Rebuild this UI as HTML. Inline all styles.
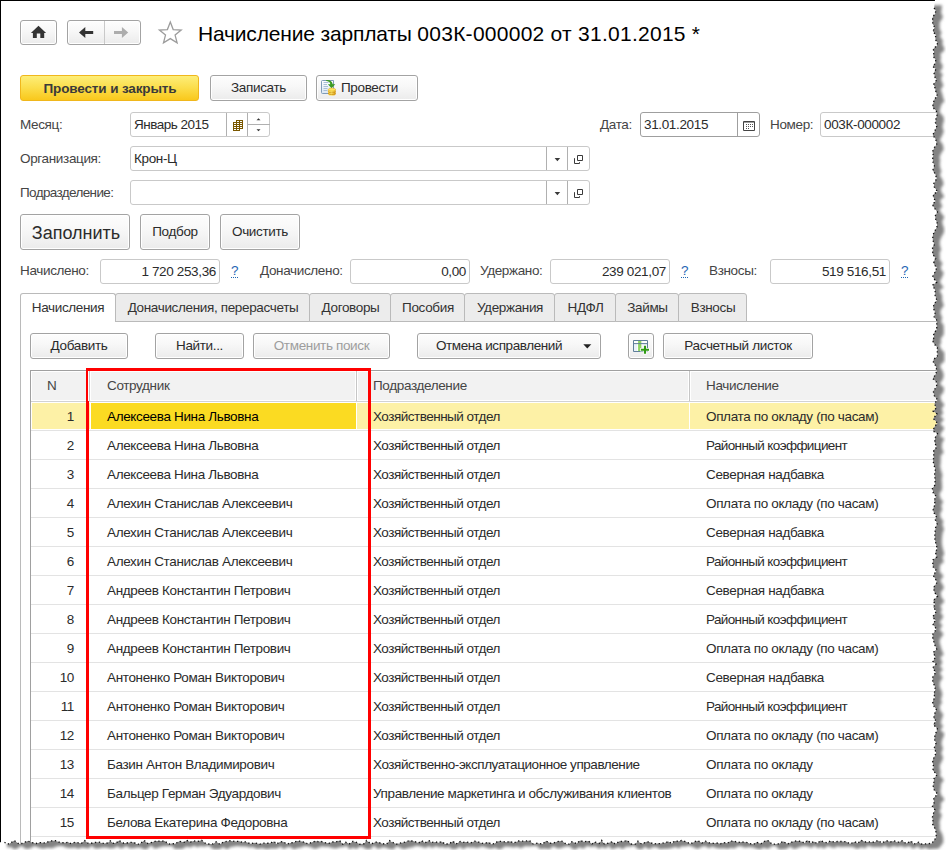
<!DOCTYPE html>
<html lang="ru"><head><meta charset="utf-8"><title>Начисление зарплаты 003К-000002 от 31.01.2015</title>
<style>
html,body{margin:0;padding:0;background:#fff;}
body{width:946px;height:850px;overflow:hidden;position:relative;font-family:"Liberation Sans",Arial,sans-serif;font-size:13.5px;letter-spacing:-.35px;color:#2b2b2b;}
#app{position:absolute;left:0;top:0;width:946px;height:850px;overflow:hidden;}
.abs{position:absolute;}
.frame-l{position:absolute;left:0;top:0;width:1px;height:850px;background:#000;}
.frame-t{position:absolute;left:0;top:0;width:946px;height:1px;background:#000;}
.btn{position:absolute;box-sizing:border-box;border:1px solid #a3a3a3;border-radius:3px;background:linear-gradient(#fdfdfd,#f7f7f7 45%,#ebebeb);color:#2b2b2b;text-align:center;white-space:nowrap;box-shadow:inset 0 0 0 1px #fff;}
.btn.h26{height:26px;line-height:24px;}
.btn.dis{color:#9d9d9d;}
.btn.yel{line-height:26px !important;letter-spacing:-.13px;background:linear-gradient(#fdee78,#fbdd4a 50%,#f9c81c);border-color:#f0b71c;box-shadow:none;padding-left:1px;font-weight:bold;color:#3a3a3a;}
.btn.big{height:36px;line-height:34px;}
.lbl{position:absolute;color:#454545;white-space:nowrap;line-height:16px;}
.inp{position:absolute;box-sizing:border-box;height:25px;border:1px solid #c9c9c9;border-radius:3px;background:#fff;}
.inp.foc{border-color:#9f9f9f;}
.inp .t{position:absolute;left:3px;top:4px;line-height:16px;color:#2b2b2b;white-space:nowrap;}
.inp .t.r{left:auto;right:3px;}
.inp .dv{position:absolute;top:0;bottom:0;width:1px;background:#b0b0b0;}
.inp.foc .dv{background:#9f9f9f;}
.q{position:absolute;color:#1f66b3;line-height:16px;border-bottom:1px dotted #1f66b3;height:14px;}
.title{position:absolute;left:198px;top:21px;font-size:21px;line-height:26px;color:#000;white-space:nowrap;}
.tab{position:absolute;top:293px;height:29px;box-sizing:border-box;border:1px solid #bababa;border-radius:3px 3px 0 0;background:#ececec;line-height:27px;text-align:center;color:#333;white-space:nowrap;}
.tab.act{background:#fff;border-bottom:none;height:29px;border-radius:3px 3px 0 0;}

.tabline{position:absolute;left:116px;top:321px;width:830px;height:1px;background:#bababa;}
.panel-l{position:absolute;left:20px;top:321px;width:1px;height:529px;background:#bababa;}
.grid{position:absolute;left:30px;top:370px;width:916px;height:480px;box-sizing:border-box;border:1px solid #a0a0a0;border-right:none;border-bottom:none;background:#fff;}
.ghead{position:absolute;left:32px;top:372px;width:914px;height:28px;background:#f2f2f2;}
.ghead span{position:absolute;top:6px;line-height:16px;color:#454545;white-space:nowrap;}
.hsep{position:absolute;z-index:1;top:371px;width:1px;height:30px;background:#c6c6c6;box-shadow:-1px 0 0 #fff,1px 0 0 #fff;}
.hline{position:absolute;left:31px;top:400px;width:915px;height:1px;background:#d2d2d2;border-top:1px solid #fff;}
.row{position:absolute;left:31px;width:915px;height:28px;border-bottom:1px solid #e3e3e3;}
.row span{position:absolute;z-index:2;top:7px;line-height:16px;white-space:nowrap;color:#2b2b2b;}
.row .n{left:0;width:43px;text-align:right;}
.row .c1{left:76px;}
.row .c2{left:342px;}
.row .c3{left:675px;}
.row.sel{background:#fff;}
.row.sel:before{content:"";position:absolute;left:1px;top:1px;right:0;height:26px;background:#fdf1a6;}
.row.sel:after{content:"";position:absolute;left:60px;top:1px;width:265px;height:26px;background:#fbdb22;box-shadow:1px 0 0 #fff,-1px 0 0 #fff;}
.row.sel .c1{color:#000;z-index:2;}
.red{position:absolute;left:86px;top:368px;width:279px;height:465px;border:3px solid #ff0000;}
.torn{position:absolute;left:0;top:0;}
svg{display:block;}
.row.sel i{position:absolute;z-index:1;top:0;width:1px;height:28px;background:#fff;}
</style></head>
<body>
<div id="app">
<!-- top nav -->
<div class="btn" style="left:20px;top:20px;width:37px;height:25px;">
<svg class="abs" style="left:9px;top:4px" width="17" height="14" viewBox="0 0 17 14"><path d="M8.5 .7 L.9 8.1 H2.9 V13.1 H6.8 V8.6 H10.3 V13.1 H14.2 V8.1 H16.1 Z" fill="#333"/></svg>
</div>
<div class="btn" style="left:67px;top:20px;width:74px;height:25px;">
<div class="abs" style="left:36px;top:0;width:1px;height:23px;background:#c9c9c9"></div>
<svg class="abs" style="left:11px;top:6px" width="15" height="12" viewBox="0 0 15 12"><path d="M0 5.5 L6.3 0 V4 H14.2 V7 H6.3 V11 Z" fill="#333"/></svg>
<svg class="abs" style="left:46px;top:6px" width="15" height="12" viewBox="0 0 15 12"><path d="M14.2 5.5 L7.9 0 V4 H0 V7 H7.9 V11 Z" fill="#adadad"/></svg>
</div>
<svg class="abs" style="left:157px;top:20px" width="27" height="26" viewBox="0 0 27 26"><path d="M13.3 2.1 L16.2 9.6 L24.2 10.0 L18.1 15.1 L20.1 22.9 L13.3 18.6 L6.5 22.9 L8.5 15.1 L2.4 10.0 L10.4 9.6 Z" fill="#fff" stroke="#9c9c9c" stroke-width="1.3" stroke-linejoin="miter"/></svg>
<div class="title"><span style="letter-spacing:-.17px">Начисление зарплаты </span><span style="letter-spacing:.26px">003К-000002 от 31.01.2015 *</span></div>

<!-- command bar -->
<div class="btn yel h26" style="left:20px;top:75px;width:179px;">Провести и закрыть</div>
<div class="btn h26" style="left:210px;top:75px;width:97px;">Записать</div>
<div class="btn h26" style="left:316px;top:75px;width:102px;text-align:left;"><span class="abs" style="left:24px;top:0">Провести</span>
<svg class="abs" style="left:4px;top:3px" width="16" height="17" viewBox="0 0 16 17">
<defs><linearGradient id="dg" x1="0" y1="0" x2="0" y2="1"><stop offset="0" stop-color="#fff"/><stop offset="1" stop-color="#d9e6f3"/></linearGradient>
<linearGradient id="cg" x1="0" y1="0" x2="1" y2="0"><stop offset="0" stop-color="#f3c231"/><stop offset=".45" stop-color="#fff07a"/><stop offset="1" stop-color="#d99a10"/></linearGradient></defs>
<path d="M.5 2.5 Q.5 1.5 1.5 1.5 H12.5 V14.5 H1.5 Q.5 14.5 .5 13.5Z" fill="url(#dg)" stroke="#7f9bb8"/>
<path d="M2.5 3.5H7.5M2.5 5.5H6M2.5 7.5H7M2.5 9.5H6.5M2.5 11.5H6.5" stroke="#a9bfd6" stroke-width="1"/>
<path d="M5.2 1.1 C9 .6 11.3 2.4 11.7 5.2 H14.3 L10.5 9.2 L6.9 5.2 H9.3 C9 3.4 7.6 2.2 5.2 2.1Z" fill="#3c9a22"/>
<path d="M7.2 10.6 V15 A3.7 1.7 0 0 0 14.6 15 V10.6Z" fill="url(#cg)"/>
<ellipse cx="10.9" cy="10.6" rx="3.7" ry="1.6" fill="#ffe45c" stroke="#d9a21a" stroke-width=".5"/>
<path d="M7.2 12.3 A3.7 1.6 0 0 0 14.6 12.3 M7.2 14 A3.7 1.6 0 0 0 14.6 14" fill="none" stroke="#c98a0c" stroke-width=".7"/>
</svg></div>

<!-- row: month / date / number -->
<div class="lbl" style="left:20px;top:117px">Месяц:</div>
<div class="inp" style="left:130px;top:112px;width:140px;"><span class="t" style="letter-spacing:-.5px">Январь 2015</span>
<div class="dv" style="left:95px"></div><div class="dv" style="left:116px"></div>
<div class="abs" style="left:117px;top:11px;width:22px;height:1px;background:#b0b0b0"></div>
<svg class="abs" style="left:102px;top:7px" width="11" height="11" viewBox="0 0 11 11"><path d="M3 .5H10M0 2.5H10M0 4.5H10M0 6.5H10M0 8.5H10M0 10.5H7M.5 2.5V10.5M3.5 .5V10.5M6.5 .5V10.5M9.5 .5V8.5" fill="none" stroke="#7a5800" stroke-width="1"/></svg>
<svg class="abs" style="left:125px;top:5px" width="5" height="3" viewBox="0 0 5 3"><path d="M.5 2.2L2.5 .2L4.5 2.2Z" fill="#333"/></svg>
<svg class="abs" style="left:125px;top:16px" width="5" height="3" viewBox="0 0 5 3"><path d="M.5 .2L2.5 2.2L4.5 .2Z" fill="#333"/></svg>
</div>
<div class="lbl" style="left:600px;top:117px">Дата:</div>
<div class="inp foc" style="left:640px;top:112px;width:120px;"><span class="t">31.01.2015</span>
<div class="dv" style="left:96px"></div>
<svg class="abs" style="left:102px;top:8px" width="12" height="10" viewBox="0 0 12 10"><path d="M.5 .5H11.5V9.5H.5Z" fill="#fff" stroke="#444" stroke-width="1"/><path d="M1 1.25H11" stroke="#444" stroke-width=".7"/><path d="M3 3h1v1H3zM5 3h1v1H5zM7 3h1v1H7zM9 3h1v1H9zM3 5h1v1H3zM5 5h1v1H5zM7 5h1v1H7zM9 5h1v1H9zM3 7h1v1H3zM5 7h1v1H5z" fill="#555"/></svg>
</div>
<div class="lbl" style="left:770px;top:117px">Номер:</div>
<div class="inp" style="left:820px;top:112px;width:140px;"><span class="t">003К-000002</span></div>

<!-- row: organization -->
<div class="lbl" style="left:20px;top:151px">Организация:</div>
<div class="inp" style="left:130px;top:146px;width:460px;"><span class="t">Крон-Ц</span>
<div class="dv" style="left:415px"></div><div class="dv" style="left:436px"></div>
<svg class="abs" style="left:423px;top:11px" width="7" height="4" viewBox="0 0 7 4"><path d="M.6 0H6.2L3.4 3.3Z" fill="#3a3a3a"/></svg>
<svg class="abs" style="left:443px;top:8px" width="10" height="10" viewBox="0 0 10 10"><path d="M3.5 .5H8.5V5.5H3.5Z M.5 3.2V8.5H5.5V7.2" fill="none" stroke="#3a3a3a" stroke-width="1"/></svg>
</div>
<!-- row: department -->
<div class="lbl" style="left:20px;top:185px;letter-spacing:-.63px">Подразделение:</div>
<div class="inp" style="left:130px;top:180px;width:460px;">
<div class="dv" style="left:415px"></div><div class="dv" style="left:436px"></div>
<svg class="abs" style="left:423px;top:11px" width="7" height="4" viewBox="0 0 7 4"><path d="M.6 0H6.2L3.4 3.3Z" fill="#3a3a3a"/></svg>
<svg class="abs" style="left:443px;top:8px" width="10" height="10" viewBox="0 0 10 10"><path d="M3.5 .5H8.5V5.5H3.5Z M.5 3.2V8.5H5.5V7.2" fill="none" stroke="#3a3a3a" stroke-width="1"/></svg>
</div>

<!-- big buttons -->
<div class="btn big" style="left:20px;top:214px;width:110px;font-size:18px;line-height:36px;letter-spacing:0;padding-left:2px;">Заполнить</div>
<div class="btn big" style="left:140px;top:214px;width:70px;">Подбор</div>
<div class="btn big" style="left:220px;top:214px;width:80px;">Очистить</div>

<!-- totals -->
<div class="lbl" style="left:20px;top:263px">Начислено:</div>
<div class="inp" style="left:100px;top:259px;width:120px;"><span class="t r">1 720 253,36</span></div>
<div class="q" style="left:231px;top:263px">?</div>
<div class="lbl" style="left:260px;top:263px">Доначислено:</div>
<div class="inp" style="left:350px;top:259px;width:120px;"><span class="t r">0,00</span></div>
<div class="lbl" style="left:480px;top:263px">Удержано:</div>
<div class="inp" style="left:550px;top:259px;width:120px;"><span class="t r">239 021,07</span></div>
<div class="q" style="left:681px;top:263px">?</div>
<div class="lbl" style="left:709px;top:263px">Взносы:</div>
<div class="inp" style="left:770px;top:259px;width:120px;"><span class="t r">519 516,51</span></div>
<div class="q" style="left:901px;top:263px">?</div>

<!-- tabs -->
<div class="tabline"></div>
<div class="tab" style="left:115px;width:195px;text-indent:1px;">Доначисления, перерасчеты</div>
<div class="tab" style="left:309px;width:82px;text-indent:1px;">Договоры</div>
<div class="tab" style="left:390px;width:75px;text-indent:1px;">Пособия</div>
<div class="tab" style="left:464px;width:91px;text-indent:1px;">Удержания</div>
<div class="tab" style="left:554px;width:62px;text-indent:1px;">НДФЛ</div>
<div class="tab" style="left:615px;width:64px;text-indent:1px;">Займы</div>
<div class="tab last" style="left:678px;width:69px;text-indent:1px;">Взносы</div>
<div class="tab act" style="left:20px;width:96px;">Начисления</div>
<div class="panel-l"></div>

<!-- toolbar -->
<div class="btn h26" style="left:30px;top:333px;width:98px;">Добавить</div>
<div class="btn h26" style="left:155px;top:333px;width:89px;">Найти...</div>
<div class="btn h26 dis" style="left:253px;top:333px;width:137px;">Отменить поиск</div>
<div class="btn h26" style="left:417px;top:333px;width:184px;text-align:left;"><span class="abs" style="left:18px;top:0;letter-spacing:-.42px">Отмена исправлений</span>
<svg class="abs" style="left:165px;top:10px" width="9" height="5" viewBox="0 0 9 5"><path d="M.3 .3H8.3L4.3 4.5Z" fill="#222"/></svg></div>
<div class="btn h26" style="left:628px;top:333px;width:26px;">
<svg class="abs" style="left:4px;top:6px" width="18" height="16" viewBox="0 0 18 16">
<path d="M.5 .5H14.5V11.5H.5Z" fill="#eaf1f8" stroke="#5f7f99" stroke-width="1"/>
<path d="M1 1H4.5V3H1ZM9.5 1H14V3H9.5Z" fill="#fff"/>
<path d="M5 1H8.6V11H5Z" fill="#8fd460"/>
<path d="M4.6 1V11M9 1V11" stroke="#fff" stroke-width=".9" fill="none"/><path d="M.5 3.6H14.5" stroke="#5f7f99" stroke-width="1" fill="none"/>
<path d="M12 5V14.6M7.2 9.8H16.8" stroke="#fff" stroke-width="3.6" opacity=".9"/>
<path d="M12 5.8V13.8M8 9.8H16" stroke="#2f9a12" stroke-width="2.1"/>
</svg></div>
<div class="btn h26" style="left:663px;top:333px;width:150px;">Расчетный листок</div>

<!-- grid -->
<div class="grid"></div>
<div class="ghead"><span style="left:15px">N</span><span style="left:75px">Сотрудник</span><span style="left:341px">Подразделение</span><span style="left:674px">Начисление</span></div>
<div class="hsep" style="left:89px"></div><div class="hsep" style="left:356px"></div><div class="hsep" style="left:689px"></div>
<div class="hline"></div>
<div class="row sel" style="top:402px"><i style="left:658px"></i><span class="n">1</span><span class="c1">Алексеева Нина Львовна</span><span class="c2" style="letter-spacing:-0.5px">Хозяйственный отдел</span><span class="c3">Оплата по окладу (по часам)</span></div>
<div class="row" style="top:431px"><span class="n">2</span><span class="c1">Алексеева Нина Львовна</span><span class="c2" style="letter-spacing:-0.5px">Хозяйственный отдел</span><span class="c3" style="letter-spacing:-0.63px">Районный коэффициент</span></div>
<div class="row" style="top:460px"><span class="n">3</span><span class="c1">Алексеева Нина Львовна</span><span class="c2" style="letter-spacing:-0.5px">Хозяйственный отдел</span><span class="c3">Северная надбавка</span></div>
<div class="row" style="top:489px"><span class="n">4</span><span class="c1">Алехин Станислав Алексеевич</span><span class="c2" style="letter-spacing:-0.5px">Хозяйственный отдел</span><span class="c3">Оплата по окладу (по часам)</span></div>
<div class="row" style="top:518px"><span class="n">5</span><span class="c1">Алехин Станислав Алексеевич</span><span class="c2" style="letter-spacing:-0.5px">Хозяйственный отдел</span><span class="c3">Северная надбавка</span></div>
<div class="row" style="top:547px"><span class="n">6</span><span class="c1">Алехин Станислав Алексеевич</span><span class="c2" style="letter-spacing:-0.5px">Хозяйственный отдел</span><span class="c3" style="letter-spacing:-0.63px">Районный коэффициент</span></div>
<div class="row" style="top:576px"><span class="n">7</span><span class="c1">Андреев Константин Петрович</span><span class="c2" style="letter-spacing:-0.5px">Хозяйственный отдел</span><span class="c3">Северная надбавка</span></div>
<div class="row" style="top:605px"><span class="n">8</span><span class="c1">Андреев Константин Петрович</span><span class="c2" style="letter-spacing:-0.5px">Хозяйственный отдел</span><span class="c3" style="letter-spacing:-0.63px">Районный коэффициент</span></div>
<div class="row" style="top:634px"><span class="n">9</span><span class="c1">Андреев Константин Петрович</span><span class="c2" style="letter-spacing:-0.5px">Хозяйственный отдел</span><span class="c3">Оплата по окладу (по часам)</span></div>
<div class="row" style="top:663px"><span class="n">10</span><span class="c1">Антоненко Роман Викторович</span><span class="c2" style="letter-spacing:-0.5px">Хозяйственный отдел</span><span class="c3">Северная надбавка</span></div>
<div class="row" style="top:692px"><span class="n">11</span><span class="c1">Антоненко Роман Викторович</span><span class="c2" style="letter-spacing:-0.5px">Хозяйственный отдел</span><span class="c3" style="letter-spacing:-0.63px">Районный коэффициент</span></div>
<div class="row" style="top:721px"><span class="n">12</span><span class="c1">Антоненко Роман Викторович</span><span class="c2" style="letter-spacing:-0.5px">Хозяйственный отдел</span><span class="c3">Оплата по окладу (по часам)</span></div>
<div class="row" style="top:750px"><span class="n">13</span><span class="c1">Базин Антон Владимирович</span><span class="c2" style="letter-spacing:-0.44px">Хозяйственно-эксплуатационное управление</span><span class="c3">Оплата по окладу</span></div>
<div class="row" style="top:779px"><span class="n">14</span><span class="c1">Бальцер Герман Эдуардович</span><span class="c2" style="letter-spacing:-0.38px">Управление маркетинга и обслуживания клиентов</span><span class="c3">Оплата по окладу</span></div>
<div class="row" style="top:808px"><span class="n">15</span><span class="c1">Белова Екатерина Федоровна</span><span class="c2" style="letter-spacing:-0.5px">Хозяйственный отдел</span><span class="c3">Оплата по окладу (по часам)</span></div>
<div class="row" style="top:837px"><span class="n"></span><span class="c1"></span><span class="c2"></span><span class="c3"></span></div>
<div class="red"></div>
<div class="frame-l"></div><div class="frame-t"></div>
<svg class="torn" width="946" height="850" viewBox="0 0 946 850">
<defs>
<filter id="bl" x="-5%" y="-5%" width="110%" height="110%"><feGaussianBlur stdDeviation="1.6"/></filter>
<clipPath id="outc"><path clip-rule="evenodd" d="M0 0 H946 V850 H0 Z M0 0 L935 0 L934.1 8 L935.8 10.9 L935.2 13.6 L932.7 17.0 L932.6 20.7 L932.8 24.3 L934.6 27.1 L933.0 31.6 L935.7 34.7 L935.4 39.5 L937.5 43.0 L936.9 45.7 L933.2 48.9 L934.0 51.7 L933.3 56.2 L935.7 60.2 L935.2 63.6 L932.7 66.3 L935.9 69.3 L934.0 72.8 L934.8 76.8 L936.5 80.1 L933.7 84.3 L935.1 88.2 L936.2 92.9 L937.5 96.1 L934.6 98.9 L933.2 103.3 L932.6 107.1 L936.4 111.2 L937.0 115.2 L936.0 118.4 L935.4 122.4 L936.8 126.1 L934.9 130.9 L932.7 135.1 L935.8 139.3 L936.7 144.3 L934.4 147.5 L932.5 151.7 L933.3 155.4 L932.7 158.2 L933.1 162.6 L934.4 165.7 L932.8 170.4 L935.3 174.0 L936.7 178.7 L933.8 183.4 L934.3 186.9 L937.4 191.6 L933.3 194.5 L933.6 197.6 L935.5 201.3 L932.4 204.4 L934.3 208.0 L937.4 211.9 L935.1 216.1 L935.9 220.2 L937.1 222.8 L936.9 227.3 L934.4 231.8 L932.9 235.3 L932.7 239.3 L933.5 242.0 L934.2 244.9 L932.4 247.5 L932.9 250.4 L932.5 253.8 L935.6 258.5 L933.7 261.4 L934.3 264.8 L936.8 267.6 L934.8 272.5 L932.8 276.3 L934.2 279.0 L936.7 282.2 L932.5 285.1 L935.1 290.0 L935.2 292.8 L935.1 295.4 L936.9 300.3 L933.8 304.6 L933.3 308.0 L935.2 312.4 L934.1 316.9 L936.6 319.9 L936.8 324.9 L936.7 329.4 L933.6 333.8 L934.2 337.5 L932.5 340.1 L933.7 343.3 L937.4 347.6 L937.3 351.2 L937.4 356.1 L933.5 359.6 L933.4 362.6 L935.6 365.6 L936.8 370.4 L935.8 374.1 L932.8 378.6 L937.1 382.7 L936.3 387.2 L933.3 390.9 L934.1 395.4 L937.5 399.9 L934.5 403.3 L936.2 408.2 L933.1 411.1 L937.1 414.0 L933.2 418.5 L937.5 423.1 L934.2 427.2 L933.1 431.1 L937.4 433.6 L935.1 437.8 L934.7 442.6 L936.7 447.3 L933.7 450.3 L933.7 453.5 L933.7 457.5 L933.1 461.1 L934.2 465.8 L935.4 469.5 L934.6 474.2 L935.0 479.0 L935.1 482.9 L934.7 485.4 L932.4 488.4 L933.3 492.9 L936.2 496.5 L934.1 500.4 L935.3 504.2 L933.0 508.7 L933.7 512.6 L936.4 515.8 L935.3 519.6 L937.1 524.0 L935.6 527.6 L935.1 531.3 L934.8 535.6 L934.9 539.4 L936.0 544.2 L937.3 548.9 L935.3 552.1 L936.8 556.9 L933.0 559.8 L932.8 563.4 L932.8 566.5 L936.5 570.7 L933.2 575.4 L935.8 579.7 L937.0 582.6 L933.5 587.5 L934.5 592.4 L937.5 596.1 L933.2 600.7 L935.1 604.2 L933.4 607.6 L936.2 610.9 L935.3 613.4 L932.5 617.0 L935.6 620.4 L932.7 624.1 L936.5 629.1 L932.9 634.0 L932.6 637.2 L933.8 641.6 L934.6 644.5 L936.7 649.2 L933.2 652.4 L935.4 657.2 L932.9 661.4 L936.0 664.1 L932.8 667.7 L935.7 672.5 L932.8 677.0 L932.7 681.6 L934.8 686.3 L935.3 689.6 L933.8 694.5 L935.1 697.3 L933.0 700.4 L932.7 703.3 L934.0 706.3 L936.3 709.6 L935.0 712.8 L934.2 715.7 L933.7 718.3 L936.2 720.8 L933.4 724.7 L937.3 728.4 L936.7 731.1 L935.0 734.7 L934.4 739.3 L936.0 743.1 L934.2 748.0 L936.1 752.6 L934.5 756.7 L932.7 760.1 L932.8 762.9 L933.7 767.2 L932.8 770.2 L936.9 774.8 L933.9 778.9 L933.9 782.0 L933.2 785.7 L933.8 789.3 L937.5 794.2 L933.7 798.1 L934.0 803.0 L932.4 806.4 L934.9 809.8 L933.4 813.6 L932.4 817.4 L932.9 820.5 L932.6 824.0 L934.0 826.6 L935.4 829.6 L936.3 833.5 L936.1 837.6 L931.8 843.4 L928.9 843.6 L924.8 843.9 L921.3 844.0 L918.7 842.2 L913.8 844.1 L911.0 841.1 L906.0 843.5 L902.3 840.7 L897.5 842.4 L894.3 840.9 L890.5 841.8 L886.5 840.7 L881.7 842.9 L877.8 840.4 L874.9 842.1 L870.2 841.9 L865.7 842.0 L860.9 840.3 L857.9 843.2 L854.9 841.8 L849.9 843.8 L846.4 841.7 L842.5 841.5 L837.6 841.5 L834.4 841.9 L830.1 841.0 L827.4 842.9 L823.5 841.9 L820.8 840.6 L816.9 843.5 L813.9 841.5 L810.9 843.0 L807.6 840.3 L804.6 842.9 L800.6 841.3 L797.6 840.9 L794.2 841.2 L790.1 842.7 L787.4 844.1 L782.9 841.3 L779.3 843.8 L775.9 844.0 L771.9 844.2 L768.9 840.8 L765.7 840.5 L760.9 843.7 L756.4 842.2 L753.6 844.3 L749.5 843.5 L746.4 842.3 L741.4 841.9 L738.1 842.6 L733.4 840.9 L730.3 841.3 L727.3 843.3 L723.8 842.6 L720.6 843.7 L717.8 843.0 L713.2 843.3 L709.0 842.8 L705.5 841.2 L701.8 843.1 L698.1 840.7 L695.4 841.4 L690.4 843.8 L685.5 841.6 L681.6 840.4 L678.9 841.3 L674.5 841.1 L671.8 843.4 L668.4 841.6 L665.1 842.7 L660.7 843.6 L656.3 843.5 L653.4 844.0 L649.6 842.0 L646.5 841.8 L641.6 844.1 L637.9 841.2 L635.4 844.1 L631.3 844.0 L626.9 840.3 L623.7 841.6 L619.4 841.3 L615.4 844.1 L612.2 841.7 L607.5 843.3 L604.3 844.0 L601.7 840.4 L599.1 843.4 L594.5 841.9 L592.0 843.9 L588.5 841.1 L583.7 841.8 L580.1 840.5 L576.5 843.6 L571.9 841.7 L568.9 844.2 L566.1 844.1 L562.7 841.4 L560.2 841.0 L556.9 841.8 L553.4 843.0 L550.9 843.3 L546.0 841.0 L542.7 844.0 L537.7 843.2 L533.0 843.9 L529.5 840.5 L526.9 840.9 L521.9 841.2 L518.5 840.9 L513.6 843.0 L510.0 841.2 L507.1 842.3 L502.2 841.5 L497.8 841.2 L494.7 843.6 L491.4 844.2 L488.4 842.3 L484.1 843.5 L481.1 843.0 L477.5 841.7 L474.9 841.2 L470.1 843.0 L467.0 842.0 L462.8 842.3 L460.2 841.5 L456.0 844.1 L452.9 841.2 L449.2 843.8 L445.1 844.1 L441.4 841.5 L438.9 842.7 L435.8 841.9 L431.9 842.4 L429.2 840.7 L425.0 842.8 L421.8 840.8 L418.6 842.9 L413.8 841.2 L409.3 840.5 L405.4 842.1 L401.0 842.9 L396.7 844.1 L392.5 842.4 L389.6 840.7 L386.5 844.2 L381.9 843.6 L377.0 841.9 L374.5 842.6 L370.9 843.9 L366.6 840.4 L364.0 843.8 L359.4 844.1 L355.8 841.9 L352.7 841.4 L349.6 843.8 L345.6 842.3 L342.7 844.2 L339.6 840.5 L336.2 841.8 L332.4 842.0 L328.9 843.3 L324.1 842.6 L321.0 841.3 L318.3 841.7 L315.5 841.1 L312.7 842.1 L307.7 843.9 L304.7 842.3 L299.9 841.1 L297.0 841.0 L293.5 842.5 L290.2 842.9 L287.1 844.2 L282.7 841.5 L279.4 842.2 L276.6 844.0 L273.9 841.4 L269.8 843.3 L266.2 843.2 L263.6 843.2 L259.7 844.1 L254.9 842.8 L250.4 843.8 L245.5 841.8 L242.5 842.3 L239.4 841.3 L234.5 841.4 L229.9 840.7 L227.3 841.4 L223.8 841.7 L219.8 844.3 L216.3 841.8 L213.1 843.9 L208.8 844.0 L206.0 843.7 L201.6 840.3 L197.0 841.6 L193.7 840.9 L190.4 842.1 L186.7 840.3 L184.1 842.2 L179.4 841.2 L175.1 843.8 L171.3 843.6 L168.5 844.1 L164.7 840.9 L160.7 841.1 L155.9 841.1 L152.7 842.1 L147.8 843.6 L144.1 840.4 L139.3 844.2 L136.3 843.9 L133.5 842.2 L129.8 842.4 L126.6 843.0 L122.4 843.0 L119.2 840.5 L116.7 842.6 L113.4 843.3 L110.3 840.9 L107.6 842.9 L103.5 843.4 L99.3 842.2 L95.9 842.3 L90.9 843.3 L87.9 843.2 L84.8 840.6 L81.6 843.2 L79.0 842.9 L75.1 842.3 L70.8 843.5 L68.3 842.3 L64.1 842.8 L60.0 842.5 L55.4 840.7 L52.0 840.8 L49.4 841.2 L45.2 843.0 L40.4 842.6 L35.9 843.5 L31.3 842.3 L27.5 840.9 L23.0 843.2 L18.9 843.9 L14.3 840.5 L10.2 843.2 L7.3 844.2 L4 841.9 L0 842.3 Z"/></clipPath>
</defs>
<path fill="#fff" fill-rule="evenodd" d="M0 0 H946 V850 H0 Z M0 0 L935 0 L934.1 8 L935.8 10.9 L935.2 13.6 L932.7 17.0 L932.6 20.7 L932.8 24.3 L934.6 27.1 L933.0 31.6 L935.7 34.7 L935.4 39.5 L937.5 43.0 L936.9 45.7 L933.2 48.9 L934.0 51.7 L933.3 56.2 L935.7 60.2 L935.2 63.6 L932.7 66.3 L935.9 69.3 L934.0 72.8 L934.8 76.8 L936.5 80.1 L933.7 84.3 L935.1 88.2 L936.2 92.9 L937.5 96.1 L934.6 98.9 L933.2 103.3 L932.6 107.1 L936.4 111.2 L937.0 115.2 L936.0 118.4 L935.4 122.4 L936.8 126.1 L934.9 130.9 L932.7 135.1 L935.8 139.3 L936.7 144.3 L934.4 147.5 L932.5 151.7 L933.3 155.4 L932.7 158.2 L933.1 162.6 L934.4 165.7 L932.8 170.4 L935.3 174.0 L936.7 178.7 L933.8 183.4 L934.3 186.9 L937.4 191.6 L933.3 194.5 L933.6 197.6 L935.5 201.3 L932.4 204.4 L934.3 208.0 L937.4 211.9 L935.1 216.1 L935.9 220.2 L937.1 222.8 L936.9 227.3 L934.4 231.8 L932.9 235.3 L932.7 239.3 L933.5 242.0 L934.2 244.9 L932.4 247.5 L932.9 250.4 L932.5 253.8 L935.6 258.5 L933.7 261.4 L934.3 264.8 L936.8 267.6 L934.8 272.5 L932.8 276.3 L934.2 279.0 L936.7 282.2 L932.5 285.1 L935.1 290.0 L935.2 292.8 L935.1 295.4 L936.9 300.3 L933.8 304.6 L933.3 308.0 L935.2 312.4 L934.1 316.9 L936.6 319.9 L936.8 324.9 L936.7 329.4 L933.6 333.8 L934.2 337.5 L932.5 340.1 L933.7 343.3 L937.4 347.6 L937.3 351.2 L937.4 356.1 L933.5 359.6 L933.4 362.6 L935.6 365.6 L936.8 370.4 L935.8 374.1 L932.8 378.6 L937.1 382.7 L936.3 387.2 L933.3 390.9 L934.1 395.4 L937.5 399.9 L934.5 403.3 L936.2 408.2 L933.1 411.1 L937.1 414.0 L933.2 418.5 L937.5 423.1 L934.2 427.2 L933.1 431.1 L937.4 433.6 L935.1 437.8 L934.7 442.6 L936.7 447.3 L933.7 450.3 L933.7 453.5 L933.7 457.5 L933.1 461.1 L934.2 465.8 L935.4 469.5 L934.6 474.2 L935.0 479.0 L935.1 482.9 L934.7 485.4 L932.4 488.4 L933.3 492.9 L936.2 496.5 L934.1 500.4 L935.3 504.2 L933.0 508.7 L933.7 512.6 L936.4 515.8 L935.3 519.6 L937.1 524.0 L935.6 527.6 L935.1 531.3 L934.8 535.6 L934.9 539.4 L936.0 544.2 L937.3 548.9 L935.3 552.1 L936.8 556.9 L933.0 559.8 L932.8 563.4 L932.8 566.5 L936.5 570.7 L933.2 575.4 L935.8 579.7 L937.0 582.6 L933.5 587.5 L934.5 592.4 L937.5 596.1 L933.2 600.7 L935.1 604.2 L933.4 607.6 L936.2 610.9 L935.3 613.4 L932.5 617.0 L935.6 620.4 L932.7 624.1 L936.5 629.1 L932.9 634.0 L932.6 637.2 L933.8 641.6 L934.6 644.5 L936.7 649.2 L933.2 652.4 L935.4 657.2 L932.9 661.4 L936.0 664.1 L932.8 667.7 L935.7 672.5 L932.8 677.0 L932.7 681.6 L934.8 686.3 L935.3 689.6 L933.8 694.5 L935.1 697.3 L933.0 700.4 L932.7 703.3 L934.0 706.3 L936.3 709.6 L935.0 712.8 L934.2 715.7 L933.7 718.3 L936.2 720.8 L933.4 724.7 L937.3 728.4 L936.7 731.1 L935.0 734.7 L934.4 739.3 L936.0 743.1 L934.2 748.0 L936.1 752.6 L934.5 756.7 L932.7 760.1 L932.8 762.9 L933.7 767.2 L932.8 770.2 L936.9 774.8 L933.9 778.9 L933.9 782.0 L933.2 785.7 L933.8 789.3 L937.5 794.2 L933.7 798.1 L934.0 803.0 L932.4 806.4 L934.9 809.8 L933.4 813.6 L932.4 817.4 L932.9 820.5 L932.6 824.0 L934.0 826.6 L935.4 829.6 L936.3 833.5 L936.1 837.6 L931.8 843.4 L928.9 843.6 L924.8 843.9 L921.3 844.0 L918.7 842.2 L913.8 844.1 L911.0 841.1 L906.0 843.5 L902.3 840.7 L897.5 842.4 L894.3 840.9 L890.5 841.8 L886.5 840.7 L881.7 842.9 L877.8 840.4 L874.9 842.1 L870.2 841.9 L865.7 842.0 L860.9 840.3 L857.9 843.2 L854.9 841.8 L849.9 843.8 L846.4 841.7 L842.5 841.5 L837.6 841.5 L834.4 841.9 L830.1 841.0 L827.4 842.9 L823.5 841.9 L820.8 840.6 L816.9 843.5 L813.9 841.5 L810.9 843.0 L807.6 840.3 L804.6 842.9 L800.6 841.3 L797.6 840.9 L794.2 841.2 L790.1 842.7 L787.4 844.1 L782.9 841.3 L779.3 843.8 L775.9 844.0 L771.9 844.2 L768.9 840.8 L765.7 840.5 L760.9 843.7 L756.4 842.2 L753.6 844.3 L749.5 843.5 L746.4 842.3 L741.4 841.9 L738.1 842.6 L733.4 840.9 L730.3 841.3 L727.3 843.3 L723.8 842.6 L720.6 843.7 L717.8 843.0 L713.2 843.3 L709.0 842.8 L705.5 841.2 L701.8 843.1 L698.1 840.7 L695.4 841.4 L690.4 843.8 L685.5 841.6 L681.6 840.4 L678.9 841.3 L674.5 841.1 L671.8 843.4 L668.4 841.6 L665.1 842.7 L660.7 843.6 L656.3 843.5 L653.4 844.0 L649.6 842.0 L646.5 841.8 L641.6 844.1 L637.9 841.2 L635.4 844.1 L631.3 844.0 L626.9 840.3 L623.7 841.6 L619.4 841.3 L615.4 844.1 L612.2 841.7 L607.5 843.3 L604.3 844.0 L601.7 840.4 L599.1 843.4 L594.5 841.9 L592.0 843.9 L588.5 841.1 L583.7 841.8 L580.1 840.5 L576.5 843.6 L571.9 841.7 L568.9 844.2 L566.1 844.1 L562.7 841.4 L560.2 841.0 L556.9 841.8 L553.4 843.0 L550.9 843.3 L546.0 841.0 L542.7 844.0 L537.7 843.2 L533.0 843.9 L529.5 840.5 L526.9 840.9 L521.9 841.2 L518.5 840.9 L513.6 843.0 L510.0 841.2 L507.1 842.3 L502.2 841.5 L497.8 841.2 L494.7 843.6 L491.4 844.2 L488.4 842.3 L484.1 843.5 L481.1 843.0 L477.5 841.7 L474.9 841.2 L470.1 843.0 L467.0 842.0 L462.8 842.3 L460.2 841.5 L456.0 844.1 L452.9 841.2 L449.2 843.8 L445.1 844.1 L441.4 841.5 L438.9 842.7 L435.8 841.9 L431.9 842.4 L429.2 840.7 L425.0 842.8 L421.8 840.8 L418.6 842.9 L413.8 841.2 L409.3 840.5 L405.4 842.1 L401.0 842.9 L396.7 844.1 L392.5 842.4 L389.6 840.7 L386.5 844.2 L381.9 843.6 L377.0 841.9 L374.5 842.6 L370.9 843.9 L366.6 840.4 L364.0 843.8 L359.4 844.1 L355.8 841.9 L352.7 841.4 L349.6 843.8 L345.6 842.3 L342.7 844.2 L339.6 840.5 L336.2 841.8 L332.4 842.0 L328.9 843.3 L324.1 842.6 L321.0 841.3 L318.3 841.7 L315.5 841.1 L312.7 842.1 L307.7 843.9 L304.7 842.3 L299.9 841.1 L297.0 841.0 L293.5 842.5 L290.2 842.9 L287.1 844.2 L282.7 841.5 L279.4 842.2 L276.6 844.0 L273.9 841.4 L269.8 843.3 L266.2 843.2 L263.6 843.2 L259.7 844.1 L254.9 842.8 L250.4 843.8 L245.5 841.8 L242.5 842.3 L239.4 841.3 L234.5 841.4 L229.9 840.7 L227.3 841.4 L223.8 841.7 L219.8 844.3 L216.3 841.8 L213.1 843.9 L208.8 844.0 L206.0 843.7 L201.6 840.3 L197.0 841.6 L193.7 840.9 L190.4 842.1 L186.7 840.3 L184.1 842.2 L179.4 841.2 L175.1 843.8 L171.3 843.6 L168.5 844.1 L164.7 840.9 L160.7 841.1 L155.9 841.1 L152.7 842.1 L147.8 843.6 L144.1 840.4 L139.3 844.2 L136.3 843.9 L133.5 842.2 L129.8 842.4 L126.6 843.0 L122.4 843.0 L119.2 840.5 L116.7 842.6 L113.4 843.3 L110.3 840.9 L107.6 842.9 L103.5 843.4 L99.3 842.2 L95.9 842.3 L90.9 843.3 L87.9 843.2 L84.8 840.6 L81.6 843.2 L79.0 842.9 L75.1 842.3 L70.8 843.5 L68.3 842.3 L64.1 842.8 L60.0 842.5 L55.4 840.7 L52.0 840.8 L49.4 841.2 L45.2 843.0 L40.4 842.6 L35.9 843.5 L31.3 842.3 L27.5 840.9 L23.0 843.2 L18.9 843.9 L14.3 840.5 L10.2 843.2 L7.3 844.2 L4 841.9 L0 842.3 Z"/>
<g clip-path="url(#outc)"><path d="M0 0 L935 0 L934.1 8 L935.8 10.9 L935.2 13.6 L932.7 17.0 L932.6 20.7 L932.8 24.3 L934.6 27.1 L933.0 31.6 L935.7 34.7 L935.4 39.5 L937.5 43.0 L936.9 45.7 L933.2 48.9 L934.0 51.7 L933.3 56.2 L935.7 60.2 L935.2 63.6 L932.7 66.3 L935.9 69.3 L934.0 72.8 L934.8 76.8 L936.5 80.1 L933.7 84.3 L935.1 88.2 L936.2 92.9 L937.5 96.1 L934.6 98.9 L933.2 103.3 L932.6 107.1 L936.4 111.2 L937.0 115.2 L936.0 118.4 L935.4 122.4 L936.8 126.1 L934.9 130.9 L932.7 135.1 L935.8 139.3 L936.7 144.3 L934.4 147.5 L932.5 151.7 L933.3 155.4 L932.7 158.2 L933.1 162.6 L934.4 165.7 L932.8 170.4 L935.3 174.0 L936.7 178.7 L933.8 183.4 L934.3 186.9 L937.4 191.6 L933.3 194.5 L933.6 197.6 L935.5 201.3 L932.4 204.4 L934.3 208.0 L937.4 211.9 L935.1 216.1 L935.9 220.2 L937.1 222.8 L936.9 227.3 L934.4 231.8 L932.9 235.3 L932.7 239.3 L933.5 242.0 L934.2 244.9 L932.4 247.5 L932.9 250.4 L932.5 253.8 L935.6 258.5 L933.7 261.4 L934.3 264.8 L936.8 267.6 L934.8 272.5 L932.8 276.3 L934.2 279.0 L936.7 282.2 L932.5 285.1 L935.1 290.0 L935.2 292.8 L935.1 295.4 L936.9 300.3 L933.8 304.6 L933.3 308.0 L935.2 312.4 L934.1 316.9 L936.6 319.9 L936.8 324.9 L936.7 329.4 L933.6 333.8 L934.2 337.5 L932.5 340.1 L933.7 343.3 L937.4 347.6 L937.3 351.2 L937.4 356.1 L933.5 359.6 L933.4 362.6 L935.6 365.6 L936.8 370.4 L935.8 374.1 L932.8 378.6 L937.1 382.7 L936.3 387.2 L933.3 390.9 L934.1 395.4 L937.5 399.9 L934.5 403.3 L936.2 408.2 L933.1 411.1 L937.1 414.0 L933.2 418.5 L937.5 423.1 L934.2 427.2 L933.1 431.1 L937.4 433.6 L935.1 437.8 L934.7 442.6 L936.7 447.3 L933.7 450.3 L933.7 453.5 L933.7 457.5 L933.1 461.1 L934.2 465.8 L935.4 469.5 L934.6 474.2 L935.0 479.0 L935.1 482.9 L934.7 485.4 L932.4 488.4 L933.3 492.9 L936.2 496.5 L934.1 500.4 L935.3 504.2 L933.0 508.7 L933.7 512.6 L936.4 515.8 L935.3 519.6 L937.1 524.0 L935.6 527.6 L935.1 531.3 L934.8 535.6 L934.9 539.4 L936.0 544.2 L937.3 548.9 L935.3 552.1 L936.8 556.9 L933.0 559.8 L932.8 563.4 L932.8 566.5 L936.5 570.7 L933.2 575.4 L935.8 579.7 L937.0 582.6 L933.5 587.5 L934.5 592.4 L937.5 596.1 L933.2 600.7 L935.1 604.2 L933.4 607.6 L936.2 610.9 L935.3 613.4 L932.5 617.0 L935.6 620.4 L932.7 624.1 L936.5 629.1 L932.9 634.0 L932.6 637.2 L933.8 641.6 L934.6 644.5 L936.7 649.2 L933.2 652.4 L935.4 657.2 L932.9 661.4 L936.0 664.1 L932.8 667.7 L935.7 672.5 L932.8 677.0 L932.7 681.6 L934.8 686.3 L935.3 689.6 L933.8 694.5 L935.1 697.3 L933.0 700.4 L932.7 703.3 L934.0 706.3 L936.3 709.6 L935.0 712.8 L934.2 715.7 L933.7 718.3 L936.2 720.8 L933.4 724.7 L937.3 728.4 L936.7 731.1 L935.0 734.7 L934.4 739.3 L936.0 743.1 L934.2 748.0 L936.1 752.6 L934.5 756.7 L932.7 760.1 L932.8 762.9 L933.7 767.2 L932.8 770.2 L936.9 774.8 L933.9 778.9 L933.9 782.0 L933.2 785.7 L933.8 789.3 L937.5 794.2 L933.7 798.1 L934.0 803.0 L932.4 806.4 L934.9 809.8 L933.4 813.6 L932.4 817.4 L932.9 820.5 L932.6 824.0 L934.0 826.6 L935.4 829.6 L936.3 833.5 L936.1 837.6 L931.8 843.4 L928.9 843.6 L924.8 843.9 L921.3 844.0 L918.7 842.2 L913.8 844.1 L911.0 841.1 L906.0 843.5 L902.3 840.7 L897.5 842.4 L894.3 840.9 L890.5 841.8 L886.5 840.7 L881.7 842.9 L877.8 840.4 L874.9 842.1 L870.2 841.9 L865.7 842.0 L860.9 840.3 L857.9 843.2 L854.9 841.8 L849.9 843.8 L846.4 841.7 L842.5 841.5 L837.6 841.5 L834.4 841.9 L830.1 841.0 L827.4 842.9 L823.5 841.9 L820.8 840.6 L816.9 843.5 L813.9 841.5 L810.9 843.0 L807.6 840.3 L804.6 842.9 L800.6 841.3 L797.6 840.9 L794.2 841.2 L790.1 842.7 L787.4 844.1 L782.9 841.3 L779.3 843.8 L775.9 844.0 L771.9 844.2 L768.9 840.8 L765.7 840.5 L760.9 843.7 L756.4 842.2 L753.6 844.3 L749.5 843.5 L746.4 842.3 L741.4 841.9 L738.1 842.6 L733.4 840.9 L730.3 841.3 L727.3 843.3 L723.8 842.6 L720.6 843.7 L717.8 843.0 L713.2 843.3 L709.0 842.8 L705.5 841.2 L701.8 843.1 L698.1 840.7 L695.4 841.4 L690.4 843.8 L685.5 841.6 L681.6 840.4 L678.9 841.3 L674.5 841.1 L671.8 843.4 L668.4 841.6 L665.1 842.7 L660.7 843.6 L656.3 843.5 L653.4 844.0 L649.6 842.0 L646.5 841.8 L641.6 844.1 L637.9 841.2 L635.4 844.1 L631.3 844.0 L626.9 840.3 L623.7 841.6 L619.4 841.3 L615.4 844.1 L612.2 841.7 L607.5 843.3 L604.3 844.0 L601.7 840.4 L599.1 843.4 L594.5 841.9 L592.0 843.9 L588.5 841.1 L583.7 841.8 L580.1 840.5 L576.5 843.6 L571.9 841.7 L568.9 844.2 L566.1 844.1 L562.7 841.4 L560.2 841.0 L556.9 841.8 L553.4 843.0 L550.9 843.3 L546.0 841.0 L542.7 844.0 L537.7 843.2 L533.0 843.9 L529.5 840.5 L526.9 840.9 L521.9 841.2 L518.5 840.9 L513.6 843.0 L510.0 841.2 L507.1 842.3 L502.2 841.5 L497.8 841.2 L494.7 843.6 L491.4 844.2 L488.4 842.3 L484.1 843.5 L481.1 843.0 L477.5 841.7 L474.9 841.2 L470.1 843.0 L467.0 842.0 L462.8 842.3 L460.2 841.5 L456.0 844.1 L452.9 841.2 L449.2 843.8 L445.1 844.1 L441.4 841.5 L438.9 842.7 L435.8 841.9 L431.9 842.4 L429.2 840.7 L425.0 842.8 L421.8 840.8 L418.6 842.9 L413.8 841.2 L409.3 840.5 L405.4 842.1 L401.0 842.9 L396.7 844.1 L392.5 842.4 L389.6 840.7 L386.5 844.2 L381.9 843.6 L377.0 841.9 L374.5 842.6 L370.9 843.9 L366.6 840.4 L364.0 843.8 L359.4 844.1 L355.8 841.9 L352.7 841.4 L349.6 843.8 L345.6 842.3 L342.7 844.2 L339.6 840.5 L336.2 841.8 L332.4 842.0 L328.9 843.3 L324.1 842.6 L321.0 841.3 L318.3 841.7 L315.5 841.1 L312.7 842.1 L307.7 843.9 L304.7 842.3 L299.9 841.1 L297.0 841.0 L293.5 842.5 L290.2 842.9 L287.1 844.2 L282.7 841.5 L279.4 842.2 L276.6 844.0 L273.9 841.4 L269.8 843.3 L266.2 843.2 L263.6 843.2 L259.7 844.1 L254.9 842.8 L250.4 843.8 L245.5 841.8 L242.5 842.3 L239.4 841.3 L234.5 841.4 L229.9 840.7 L227.3 841.4 L223.8 841.7 L219.8 844.3 L216.3 841.8 L213.1 843.9 L208.8 844.0 L206.0 843.7 L201.6 840.3 L197.0 841.6 L193.7 840.9 L190.4 842.1 L186.7 840.3 L184.1 842.2 L179.4 841.2 L175.1 843.8 L171.3 843.6 L168.5 844.1 L164.7 840.9 L160.7 841.1 L155.9 841.1 L152.7 842.1 L147.8 843.6 L144.1 840.4 L139.3 844.2 L136.3 843.9 L133.5 842.2 L129.8 842.4 L126.6 843.0 L122.4 843.0 L119.2 840.5 L116.7 842.6 L113.4 843.3 L110.3 840.9 L107.6 842.9 L103.5 843.4 L99.3 842.2 L95.9 842.3 L90.9 843.3 L87.9 843.2 L84.8 840.6 L81.6 843.2 L79.0 842.9 L75.1 842.3 L70.8 843.5 L68.3 842.3 L64.1 842.8 L60.0 842.5 L55.4 840.7 L52.0 840.8 L49.4 841.2 L45.2 843.0 L40.4 842.6 L35.9 843.5 L31.3 842.3 L27.5 840.9 L23.0 843.2 L18.9 843.9 L14.3 840.5 L10.2 843.2 L7.3 844.2 L4 841.9 L0 842.3 Z" fill="#838383" transform="translate(7,5.2)" filter="url(#bl)"/></g>
<path d="M934.1 8 L935.8 10.9 L935.2 13.6 L932.7 17.0 L932.6 20.7 L932.8 24.3 L934.6 27.1 L933.0 31.6 L935.7 34.7 L935.4 39.5 L937.5 43.0 L936.9 45.7 L933.2 48.9 L934.0 51.7 L933.3 56.2 L935.7 60.2 L935.2 63.6 L932.7 66.3 L935.9 69.3 L934.0 72.8 L934.8 76.8 L936.5 80.1 L933.7 84.3 L935.1 88.2 L936.2 92.9 L937.5 96.1 L934.6 98.9 L933.2 103.3 L932.6 107.1 L936.4 111.2 L937.0 115.2 L936.0 118.4 L935.4 122.4 L936.8 126.1 L934.9 130.9 L932.7 135.1 L935.8 139.3 L936.7 144.3 L934.4 147.5 L932.5 151.7 L933.3 155.4 L932.7 158.2 L933.1 162.6 L934.4 165.7 L932.8 170.4 L935.3 174.0 L936.7 178.7 L933.8 183.4 L934.3 186.9 L937.4 191.6 L933.3 194.5 L933.6 197.6 L935.5 201.3 L932.4 204.4 L934.3 208.0 L937.4 211.9 L935.1 216.1 L935.9 220.2 L937.1 222.8 L936.9 227.3 L934.4 231.8 L932.9 235.3 L932.7 239.3 L933.5 242.0 L934.2 244.9 L932.4 247.5 L932.9 250.4 L932.5 253.8 L935.6 258.5 L933.7 261.4 L934.3 264.8 L936.8 267.6 L934.8 272.5 L932.8 276.3 L934.2 279.0 L936.7 282.2 L932.5 285.1 L935.1 290.0 L935.2 292.8 L935.1 295.4 L936.9 300.3 L933.8 304.6 L933.3 308.0 L935.2 312.4 L934.1 316.9 L936.6 319.9 L936.8 324.9 L936.7 329.4 L933.6 333.8 L934.2 337.5 L932.5 340.1 L933.7 343.3 L937.4 347.6 L937.3 351.2 L937.4 356.1 L933.5 359.6 L933.4 362.6 L935.6 365.6 L936.8 370.4 L935.8 374.1 L932.8 378.6 L937.1 382.7 L936.3 387.2 L933.3 390.9 L934.1 395.4 L937.5 399.9 L934.5 403.3 L936.2 408.2 L933.1 411.1 L937.1 414.0 L933.2 418.5 L937.5 423.1 L934.2 427.2 L933.1 431.1 L937.4 433.6 L935.1 437.8 L934.7 442.6 L936.7 447.3 L933.7 450.3 L933.7 453.5 L933.7 457.5 L933.1 461.1 L934.2 465.8 L935.4 469.5 L934.6 474.2 L935.0 479.0 L935.1 482.9 L934.7 485.4 L932.4 488.4 L933.3 492.9 L936.2 496.5 L934.1 500.4 L935.3 504.2 L933.0 508.7 L933.7 512.6 L936.4 515.8 L935.3 519.6 L937.1 524.0 L935.6 527.6 L935.1 531.3 L934.8 535.6 L934.9 539.4 L936.0 544.2 L937.3 548.9 L935.3 552.1 L936.8 556.9 L933.0 559.8 L932.8 563.4 L932.8 566.5 L936.5 570.7 L933.2 575.4 L935.8 579.7 L937.0 582.6 L933.5 587.5 L934.5 592.4 L937.5 596.1 L933.2 600.7 L935.1 604.2 L933.4 607.6 L936.2 610.9 L935.3 613.4 L932.5 617.0 L935.6 620.4 L932.7 624.1 L936.5 629.1 L932.9 634.0 L932.6 637.2 L933.8 641.6 L934.6 644.5 L936.7 649.2 L933.2 652.4 L935.4 657.2 L932.9 661.4 L936.0 664.1 L932.8 667.7 L935.7 672.5 L932.8 677.0 L932.7 681.6 L934.8 686.3 L935.3 689.6 L933.8 694.5 L935.1 697.3 L933.0 700.4 L932.7 703.3 L934.0 706.3 L936.3 709.6 L935.0 712.8 L934.2 715.7 L933.7 718.3 L936.2 720.8 L933.4 724.7 L937.3 728.4 L936.7 731.1 L935.0 734.7 L934.4 739.3 L936.0 743.1 L934.2 748.0 L936.1 752.6 L934.5 756.7 L932.7 760.1 L932.8 762.9 L933.7 767.2 L932.8 770.2 L936.9 774.8 L933.9 778.9 L933.9 782.0 L933.2 785.7 L933.8 789.3 L937.5 794.2 L933.7 798.1 L934.0 803.0 L932.4 806.4 L934.9 809.8 L933.4 813.6 L932.4 817.4 L932.9 820.5 L932.6 824.0 L934.0 826.6 L935.4 829.6 L936.3 833.5 L936.1 837.6 L931.8 843.4 L928.9 843.6 L924.8 843.9 L921.3 844.0 L918.7 842.2 L913.8 844.1 L911.0 841.1 L906.0 843.5 L902.3 840.7 L897.5 842.4 L894.3 840.9 L890.5 841.8 L886.5 840.7 L881.7 842.9 L877.8 840.4 L874.9 842.1 L870.2 841.9 L865.7 842.0 L860.9 840.3 L857.9 843.2 L854.9 841.8 L849.9 843.8 L846.4 841.7 L842.5 841.5 L837.6 841.5 L834.4 841.9 L830.1 841.0 L827.4 842.9 L823.5 841.9 L820.8 840.6 L816.9 843.5 L813.9 841.5 L810.9 843.0 L807.6 840.3 L804.6 842.9 L800.6 841.3 L797.6 840.9 L794.2 841.2 L790.1 842.7 L787.4 844.1 L782.9 841.3 L779.3 843.8 L775.9 844.0 L771.9 844.2 L768.9 840.8 L765.7 840.5 L760.9 843.7 L756.4 842.2 L753.6 844.3 L749.5 843.5 L746.4 842.3 L741.4 841.9 L738.1 842.6 L733.4 840.9 L730.3 841.3 L727.3 843.3 L723.8 842.6 L720.6 843.7 L717.8 843.0 L713.2 843.3 L709.0 842.8 L705.5 841.2 L701.8 843.1 L698.1 840.7 L695.4 841.4 L690.4 843.8 L685.5 841.6 L681.6 840.4 L678.9 841.3 L674.5 841.1 L671.8 843.4 L668.4 841.6 L665.1 842.7 L660.7 843.6 L656.3 843.5 L653.4 844.0 L649.6 842.0 L646.5 841.8 L641.6 844.1 L637.9 841.2 L635.4 844.1 L631.3 844.0 L626.9 840.3 L623.7 841.6 L619.4 841.3 L615.4 844.1 L612.2 841.7 L607.5 843.3 L604.3 844.0 L601.7 840.4 L599.1 843.4 L594.5 841.9 L592.0 843.9 L588.5 841.1 L583.7 841.8 L580.1 840.5 L576.5 843.6 L571.9 841.7 L568.9 844.2 L566.1 844.1 L562.7 841.4 L560.2 841.0 L556.9 841.8 L553.4 843.0 L550.9 843.3 L546.0 841.0 L542.7 844.0 L537.7 843.2 L533.0 843.9 L529.5 840.5 L526.9 840.9 L521.9 841.2 L518.5 840.9 L513.6 843.0 L510.0 841.2 L507.1 842.3 L502.2 841.5 L497.8 841.2 L494.7 843.6 L491.4 844.2 L488.4 842.3 L484.1 843.5 L481.1 843.0 L477.5 841.7 L474.9 841.2 L470.1 843.0 L467.0 842.0 L462.8 842.3 L460.2 841.5 L456.0 844.1 L452.9 841.2 L449.2 843.8 L445.1 844.1 L441.4 841.5 L438.9 842.7 L435.8 841.9 L431.9 842.4 L429.2 840.7 L425.0 842.8 L421.8 840.8 L418.6 842.9 L413.8 841.2 L409.3 840.5 L405.4 842.1 L401.0 842.9 L396.7 844.1 L392.5 842.4 L389.6 840.7 L386.5 844.2 L381.9 843.6 L377.0 841.9 L374.5 842.6 L370.9 843.9 L366.6 840.4 L364.0 843.8 L359.4 844.1 L355.8 841.9 L352.7 841.4 L349.6 843.8 L345.6 842.3 L342.7 844.2 L339.6 840.5 L336.2 841.8 L332.4 842.0 L328.9 843.3 L324.1 842.6 L321.0 841.3 L318.3 841.7 L315.5 841.1 L312.7 842.1 L307.7 843.9 L304.7 842.3 L299.9 841.1 L297.0 841.0 L293.5 842.5 L290.2 842.9 L287.1 844.2 L282.7 841.5 L279.4 842.2 L276.6 844.0 L273.9 841.4 L269.8 843.3 L266.2 843.2 L263.6 843.2 L259.7 844.1 L254.9 842.8 L250.4 843.8 L245.5 841.8 L242.5 842.3 L239.4 841.3 L234.5 841.4 L229.9 840.7 L227.3 841.4 L223.8 841.7 L219.8 844.3 L216.3 841.8 L213.1 843.9 L208.8 844.0 L206.0 843.7 L201.6 840.3 L197.0 841.6 L193.7 840.9 L190.4 842.1 L186.7 840.3 L184.1 842.2 L179.4 841.2 L175.1 843.8 L171.3 843.6 L168.5 844.1 L164.7 840.9 L160.7 841.1 L155.9 841.1 L152.7 842.1 L147.8 843.6 L144.1 840.4 L139.3 844.2 L136.3 843.9 L133.5 842.2 L129.8 842.4 L126.6 843.0 L122.4 843.0 L119.2 840.5 L116.7 842.6 L113.4 843.3 L110.3 840.9 L107.6 842.9 L103.5 843.4 L99.3 842.2 L95.9 842.3 L90.9 843.3 L87.9 843.2 L84.8 840.6 L81.6 843.2 L79.0 842.9 L75.1 842.3 L70.8 843.5 L68.3 842.3 L64.1 842.8 L60.0 842.5 L55.4 840.7 L52.0 840.8 L49.4 841.2 L45.2 843.0 L40.4 842.6 L35.9 843.5 L31.3 842.3 L27.5 840.9 L23.0 843.2 L18.9 843.9 L14.3 840.5 L10.2 843.2 L7.3 844.2 L4 841.9" fill="none" stroke="#111" stroke-width="1.3" stroke-dasharray="1.3 2.6"/>
</svg>
</div>

</body></html>
